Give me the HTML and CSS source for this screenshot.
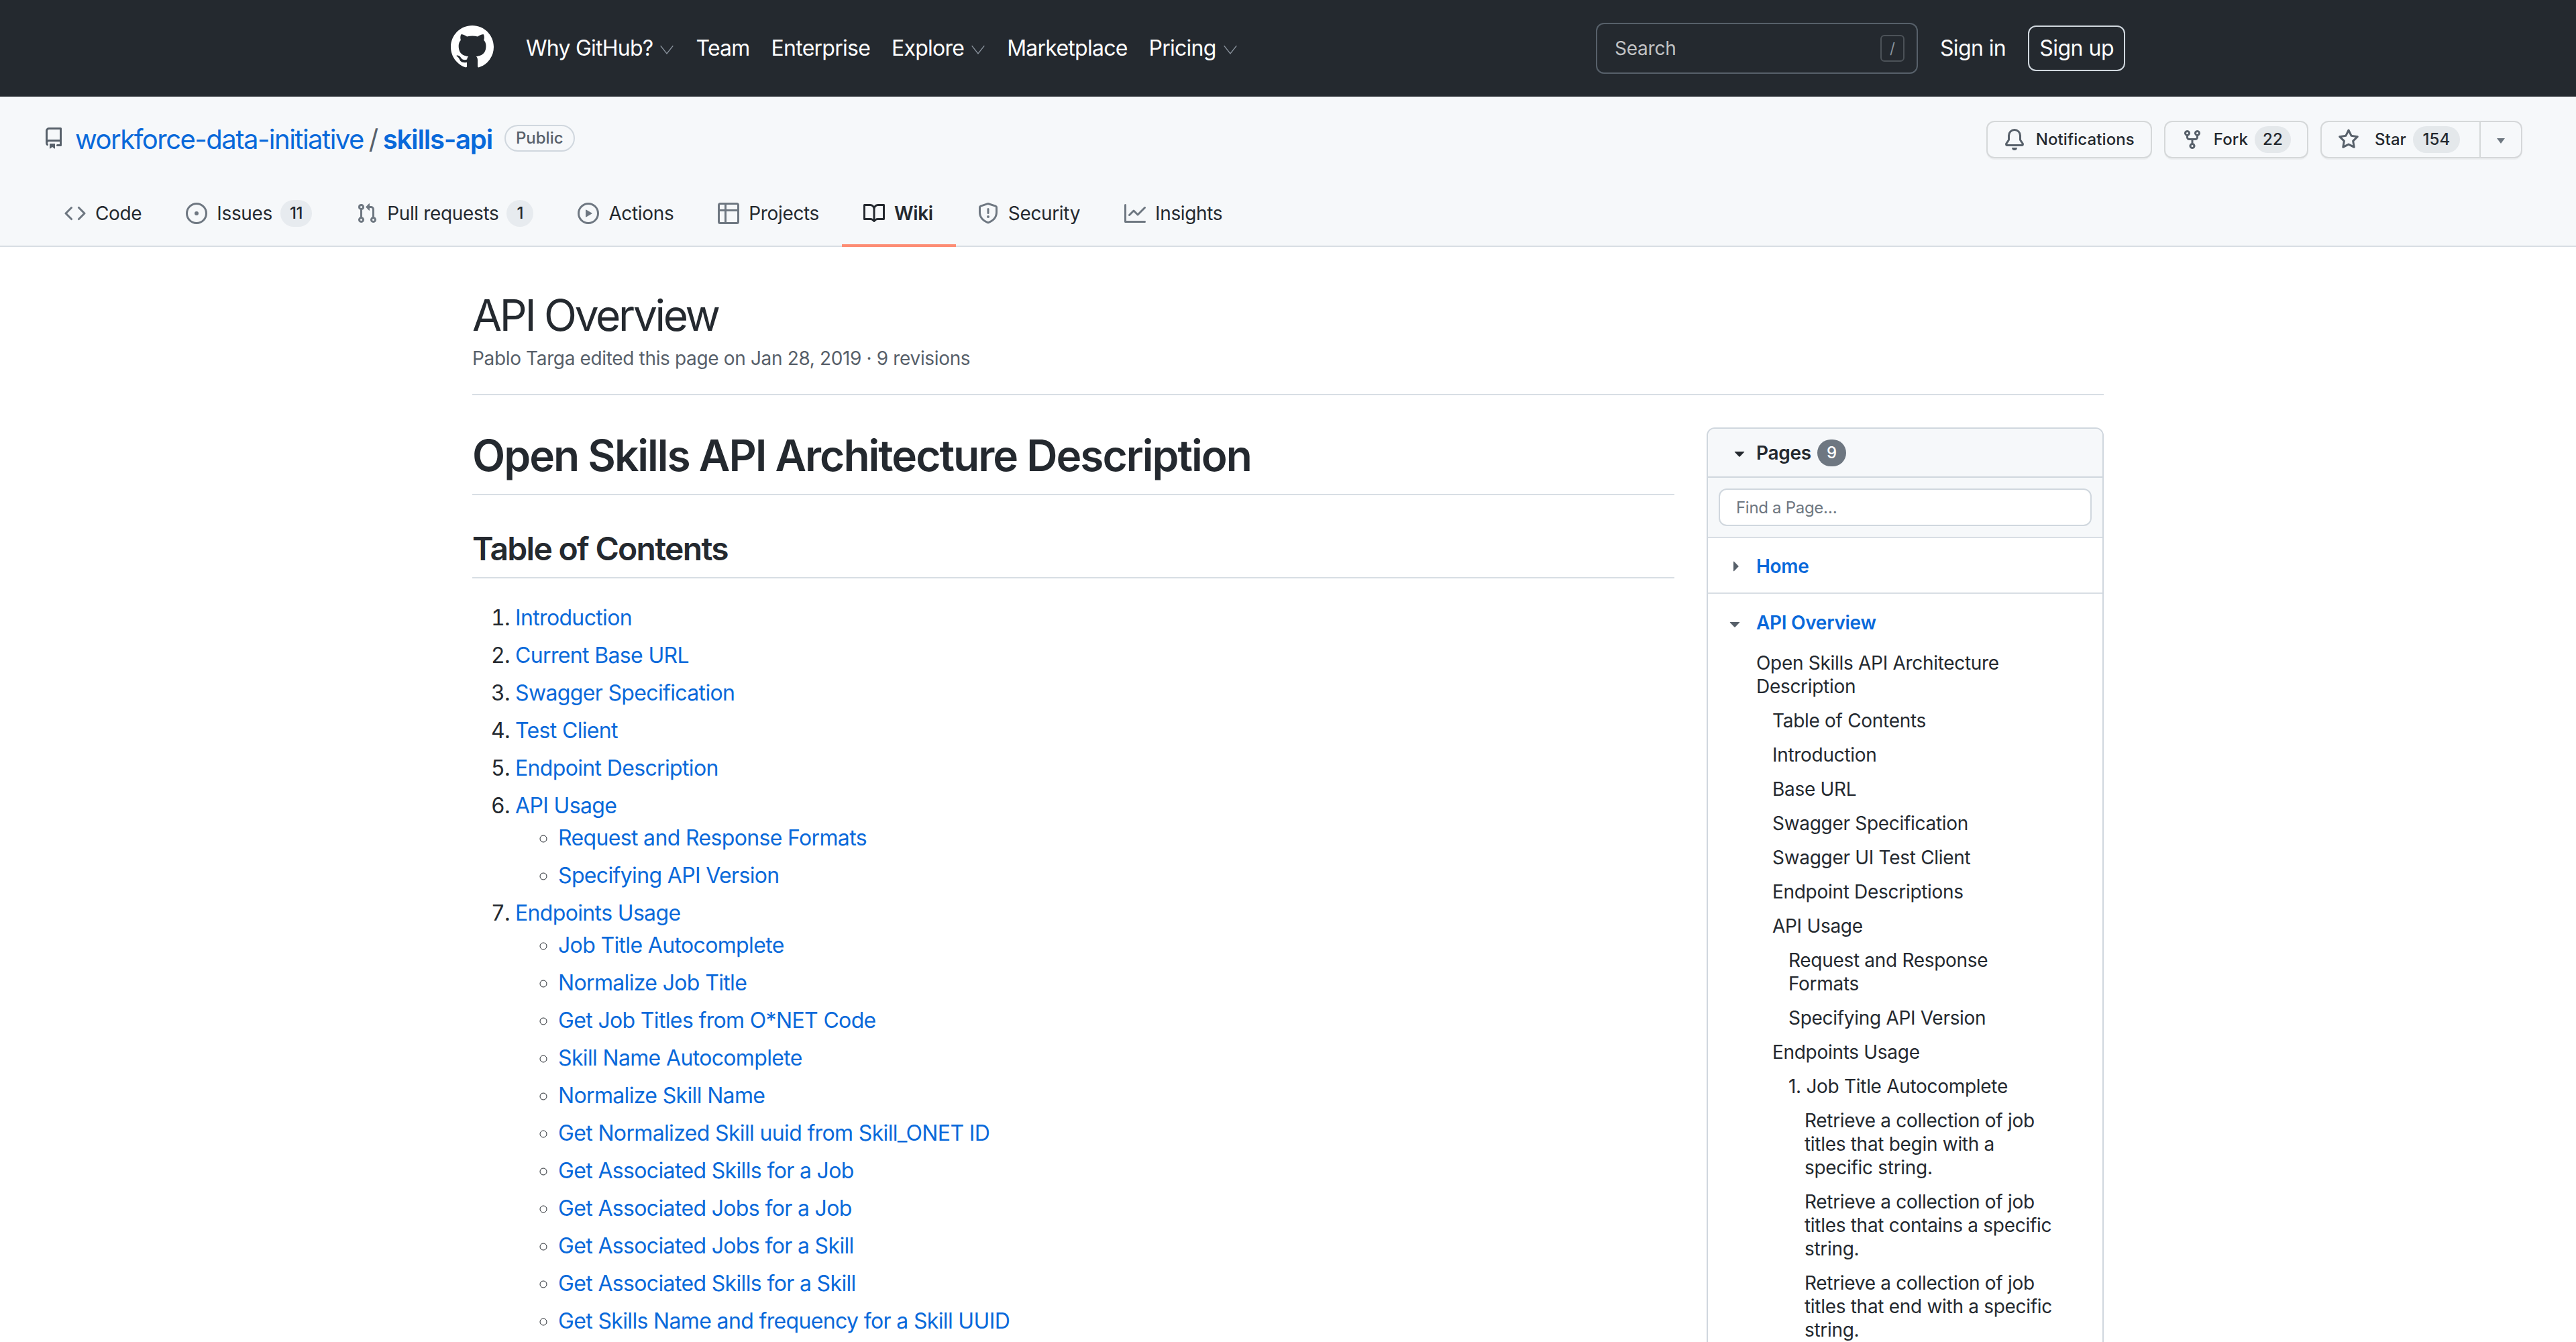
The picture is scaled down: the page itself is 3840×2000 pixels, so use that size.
FILE: index.html
```html
<!DOCTYPE html>
<html lang="en">
<head>
    <meta charset="UTF-8">
    <title>API Overview · workforce-data-initiative/skills-api Wiki</title>
    <link rel="stylesheet" href="styles.css">
</head>
<body>
    <!-- Top bar -->
    <header class="site-header">
        <div class="site-header-inner">
            <svg class="logo" viewBox="0 0 16 16"><path d="M8 0C3.58 0 0 3.58 0 8c0 3.54 2.29 6.53 5.47 7.59.4.07.55-.17.55-.38 0-.19-.01-.82-.01-1.49-2.01.37-2.53-.49-2.69-.94-.09-.23-.48-.94-.82-1.13-.28-.15-.68-.52-.01-.53.63-.01 1.08.58 1.23.82.72 1.21 1.87.87 2.33.66.07-.52.28-.87.51-1.07-1.78-.2-3.64-.89-3.64-3.95 0-.87.31-1.59.82-2.15-.08-.2-.36-1.02.08-2.12 0 0 .67-.21 2.2.82.64-.18 1.32-.27 2-.27.68 0 1.36.09 2 .27 1.53-1.04 2.2-.82 2.2-.82.44 1.1.16 1.92.08 2.12.51.56.82 1.27.82 2.15 0 3.07-1.87 3.75-3.65 3.95.29.25.54.73.54 1.48 0 1.07-.01 1.93-.01 2.2 0 .21.15.46.55.38A8.013 8.013 0 0016 8c0-4.42-3.58-8-8-8z"/></svg>
            <nav class="site-nav">
                <a href="#">Why GitHub?<svg class="chevron" viewBox="0 0 18 12"><path d="M1 1l8 10 8-10"/></svg></a>
                <a href="#">Team</a>
                <a href="#">Enterprise</a>
                <a href="#">Explore<svg class="chevron" viewBox="0 0 18 12"><path d="M1 1l8 10 8-10"/></svg></a>
                <a href="#">Marketplace</a>
                <a href="#">Pricing<svg class="chevron" viewBox="0 0 18 12"><path d="M1 1l8 10 8-10"/></svg></a>
            </nav>
            <div class="site-search">
                <span>Search</span>
                <kbd class="slash-key">/</kbd>
            </div>
            <a class="sign-in" href="#">Sign in</a>
            <a class="sign-up" href="#">Sign up</a>
        </div>
    </header>

    <!-- Repo head -->
    <section class="repo-head">
        <div class="repo-row">
            <div class="repo-title">
                <svg class="icon repo-icon" viewBox="0 0 16 16"><path fill-rule="evenodd" d="M2 2.5A2.5 2.5 0 014.5 0h8.75a.75.75 0 01.75.75v12.5a.75.75 0 01-.75.75h-2.5a.75.75 0 110-1.5h1.75v-2h-8a1 1 0 00-.714 1.7.75.75 0 01-1.072 1.05A2.495 2.495 0 012 11.5v-9zm10.5-1V9h-8c-.356 0-.694.074-1 .208V2.5a1 1 0 011-1h8zM5 12.25v3.25a.25.25 0 00.4.2l1.45-1.087a.25.25 0 01.3 0L8.6 15.7a.25.25 0 00.4-.2v-3.25a.25.25 0 00-.25-.25h-3.5a.25.25 0 00-.25.25z"/></svg>
                <a href="#">workforce-data-initiative</a>
                <span class="repo-slash">/</span>
                <a class="repo-name" href="#">skills-api</a>
                <span class="public-label">Public</span>
            </div>
            <div class="repo-actions">
                <a class="btn" href="#">
                    <svg class="icon" viewBox="0 0 16 16"><path d="M8 16a2 2 0 001.985-1.75c.017-.137-.097-.25-.235-.25h-3.5c-.138 0-.252.113-.235.25A2 2 0 008 16z"/><path fill-rule="evenodd" d="M8 1.5A3.5 3.5 0 004.5 5v2.947c0 .346-.102.683-.294.97l-1.703 2.556a.018.018 0 00-.003.01l.001.006c0 .002.002.004.004.006a.017.017 0 00.006.004l.007.001h10.964l.007-.001a.018.018 0 00.006-.004.016.016 0 00.004-.006l.001-.007a.017.017 0 00-.003-.01l-1.703-2.554a1.75 1.75 0 01-.294-.97V5A3.5 3.5 0 008 1.5zM3 5a5 5 0 0110 0v2.947c0 .05.015.098.042.139l1.703 2.555A1.518 1.518 0 0113.482 13H2.518a1.518 1.518 0 01-1.263-2.36l1.703-2.554A.25.25 0 003 7.947V5z"/></svg>
                    Notifications
                </a>
                <a class="btn" href="#">
                    <svg class="icon" viewBox="0 0 16 16"><path fill-rule="evenodd" d="M5 3.25a.75.75 0 11-1.5 0 .75.75 0 011.5 0zm0 2.122a2.25 2.25 0 10-1.5 0v.878A2.25 2.25 0 005.75 8.5h1.5v2.128a2.251 2.251 0 101.5 0V8.5h1.5a2.25 2.25 0 002.25-2.25v-.878a2.25 2.25 0 10-1.5 0v.878a.75.75 0 01-.75.75h-4.5A.75.75 0 015 6.25v-.878zm3.75 7.378a.75.75 0 11-1.5 0 .75.75 0 011.5 0zm3-8.75a.75.75 0 100-1.5.75.75 0 000 1.5z"/></svg>
                    Fork <span class="btn-count">22</span>
                </a>
                <div class="btn-group">
                    <a class="btn btn-star" href="#">
                        <svg class="icon" viewBox="0 0 16 16"><path fill-rule="evenodd" d="M8 .25a.75.75 0 01.673.418l1.882 3.815 4.21.612a.75.75 0 01.416 1.279l-3.046 2.97.719 4.192a.75.75 0 01-1.088.791L8 12.347l-3.766 1.98a.75.75 0 01-1.088-.79l.72-4.194L.818 6.374a.75.75 0 01.416-1.28l4.21-.611L7.327.668A.75.75 0 018 .25zm0 2.445L6.615 5.5a.75.75 0 01-.564.41l-3.097.45 2.24 2.184a.75.75 0 01.216.664l-.528 3.084 2.769-1.456a.75.75 0 01.698 0l2.77 1.456-.53-3.084a.75.75 0 01.216-.664l2.24-2.183-3.096-.45a.75.75 0 01-.564-.41L8 2.694v.001z"/></svg>
                        Star <span class="btn-count">154</span>
                    </a>
                    <a class="btn btn-caret" href="#"><span class="caret"></span></a>
                </div>
            </div>
        </div>
        <nav class="repo-tabs">
            <a class="tab" href="#"><svg class="icon" viewBox="0 0 16 16"><path fill-rule="evenodd" d="M4.72 3.22a.75.75 0 011.06 1.06L2.06 8l3.72 3.72a.75.75 0 11-1.06 1.06L.47 8.53a.75.75 0 010-1.06l4.25-4.25zm6.56 0a.75.75 0 10-1.06 1.06L13.94 8l-3.72 3.72a.75.75 0 101.06 1.06l4.25-4.25a.75.75 0 000-1.06l-4.25-4.25z"/></svg>Code</a>
            <a class="tab" href="#"><svg class="icon" viewBox="0 0 16 16"><path d="M8 9.5a1.5 1.5 0 100-3 1.5 1.5 0 000 3z"/><path fill-rule="evenodd" d="M8 0a8 8 0 100 16A8 8 0 008 0zM1.5 8a6.5 6.5 0 1113 0 6.5 6.5 0 01-13 0z"/></svg>Issues<span class="tab-count">11</span></a>
            <a class="tab" href="#"><svg class="icon" viewBox="0 0 16 16"><path fill-rule="evenodd" d="M7.177 3.073L9.573.677A.25.25 0 0110 .854v4.792a.25.25 0 01-.427.177L7.177 3.427a.25.25 0 010-.354zM3.75 2.5a.75.75 0 100 1.5.75.75 0 000-1.5zm-2.25.75a2.25 2.25 0 113 2.122v5.256a2.251 2.251 0 11-1.5 0V5.372A2.25 2.25 0 011.5 3.25zM11 2.5h-1V4h1a1 1 0 011 1v5.628a2.251 2.251 0 101.5 0V5A2.5 2.5 0 0011 2.5zm1 10.25a.75.75 0 111.5 0 .75.75 0 01-1.5 0zM3.75 12a.75.75 0 100 1.5.75.75 0 000-1.5z"/></svg>Pull requests<span class="tab-count">1</span></a>
            <a class="tab" href="#"><svg class="icon" viewBox="0 0 16 16"><path fill-rule="evenodd" d="M1.5 8a6.5 6.5 0 1113 0 6.5 6.5 0 01-13 0zM8 0a8 8 0 100 16A8 8 0 008 0zM6.379 5.227A.25.25 0 006 5.442v5.117a.25.25 0 00.379.214l4.264-2.559a.25.25 0 000-.428L6.379 5.227z"/></svg>Actions</a>
            <a class="tab" href="#"><svg class="icon" viewBox="0 0 16 16"><path fill-rule="evenodd" d="M0 1.75C0 .784.784 0 1.75 0h12.5C15.216 0 16 .784 16 1.75v12.5A1.75 1.75 0 0114.25 16H1.75A1.75 1.75 0 010 14.25V1.75zM1.5 6.5v7.75c0 .138.112.25.25.25H5v-8H1.5zM5 5H1.5V1.75a.25.25 0 01.25-.25H5V5zm1.5 1.5v8h7.75a.25.25 0 00.25-.25V6.5h-8zm8-1.5h-8V1.5h7.75a.25.25 0 01.25.25V5z"/></svg>Projects</a>
            <a class="tab tab-active" href="#"><svg class="icon" viewBox="0 0 16 16"><path fill-rule="evenodd" d="M0 1.75A.75.75 0 01.75 1h4.253c1.227 0 2.317.59 3 1.501A3.744 3.744 0 0111.006 1h4.245a.75.75 0 01.75.75v10.5a.75.75 0 01-.75.75h-4.507a2.25 2.25 0 00-1.591.659l-.622.621a.75.75 0 01-1.06 0l-.622-.621A2.25 2.25 0 005.258 13H.75a.75.75 0 01-.75-.75V1.75zm8.755 3a2.25 2.25 0 012.25-2.25H14.5v9h-3.757c-.71 0-1.4.201-1.992.572l.004-7.322zm-1.504 7.324l.004-5.073-.002-2.253A2.25 2.25 0 005.003 2.5H1.5v9h3.757a3.75 3.75 0 011.994.574z"/></svg>Wiki</a>
            <a class="tab" href="#"><svg class="icon" viewBox="0 0 16 16"><path fill-rule="evenodd" d="M7.467.133a1.75 1.75 0 011.066 0l5.25 1.68A1.75 1.75 0 0115 3.48V7c0 1.566-.32 3.182-1.303 4.682-.983 1.498-2.585 2.813-5.032 3.855a1.7 1.7 0 01-1.33 0c-2.447-1.042-4.049-2.357-5.032-3.855C1.32 10.182 1 8.566 1 7V3.48a1.75 1.75 0 011.217-1.667l5.25-1.68zm.61 1.429a.25.25 0 00-.153 0l-5.25 1.68a.25.25 0 00-.174.238V7c0 1.358.275 2.666 1.057 3.86.784 1.194 2.121 2.34 4.366 3.297a.2.2 0 00.154 0c2.245-.956 3.582-2.104 4.366-3.298C13.225 9.666 13.5 8.36 13.5 7V3.48a.25.25 0 00-.174-.237l-5.25-1.68zM9 10.5a1 1 0 11-2 0 1 1 0 012 0zm-.25-5.75a.75.75 0 10-1.5 0v3a.75.75 0 001.5 0v-3z"/></svg>Security</a>
            <a class="tab" href="#"><svg class="icon" viewBox="0 0 16 16"><path fill-rule="evenodd" d="M1.5 1.75a.75.75 0 00-1.5 0v12.5c0 .414.336.75.75.75h14.5a.75.75 0 000-1.5H1.5V1.75zm14.28 2.53a.75.75 0 00-1.06-1.06L10 7.94 7.53 5.47a.75.75 0 00-1.06 0L3.22 8.72a.75.75 0 001.06 1.06L7 7.06l2.47 2.47a.75.75 0 001.06 0l5.25-5.25z"/></svg>Insights</a>
        </nav>
    </section>

    <main class="container">
        <div class="wiki-head">
            <h1>API Overview</h1>
            <p>Pablo Targa edited this page on Jan 28, 2019 · 9 revisions</p>
        </div>

        <div class="wiki-layout">
            <!-- Wiki body -->
            <article class="markdown">
                <h1>Open Skills API Architecture Description</h1>
                <h2>Table of Contents</h2>
                <ol>
                    <li><a href="#">Introduction</a></li>
                    <li><a href="#">Current Base URL</a></li>
                    <li><a href="#">Swagger Specification</a></li>
                    <li><a href="#">Test Client</a></li>
                    <li><a href="#">Endpoint Description</a></li>
                    <li><a href="#">API Usage</a>
                        <ul>
                            <li><a href="#">Request and Response Formats</a></li>
                            <li><a href="#">Specifying API Version</a></li>
                        </ul>
                    </li>
                    <li><a href="#">Endpoints Usage</a>
                        <ul>
                            <li><a href="#">Job Title Autocomplete</a></li>
                            <li><a href="#">Normalize Job Title</a></li>
                            <li><a href="#">Get Job Titles from O*NET Code</a></li>
                            <li><a href="#">Skill Name Autocomplete</a></li>
                            <li><a href="#">Normalize Skill Name</a></li>
                            <li><a href="#">Get Normalized Skill uuid from Skill_ONET ID</a></li>
                            <li><a href="#">Get Associated Skills for a Job</a></li>
                            <li><a href="#">Get Associated Jobs for a Job</a></li>
                            <li><a href="#">Get Associated Jobs for a Skill</a></li>
                            <li><a href="#">Get Associated Skills for a Skill</a></li>
                            <li><a href="#">Get Skills Name and frequency for a Skill UUID</a></li>
                        </ul>
                    </li>
                </ol>
            </article>

            <!-- Pages sidebar -->
            <aside class="pages-box">
                <div class="pages-header">
                    <svg class="icon" viewBox="0 0 16 16"><path d="M4.427 7.427l3.396 3.396a.25.25 0 00.354 0l3.396-3.396A.25.25 0 0011.396 7H4.604a.25.25 0 00-.177.427z"/></svg>
                    <span>Pages</span>
                    <span class="pages-count">9</span>
                </div>
                <div class="pages-filter">
                    <div class="filter-input">Find a Page…</div>
                </div>
                <div class="page-row page-row-home">
                    <svg class="icon" viewBox="0 0 16 16"><path d="M6.427 4.427l3.396 3.396a.25.25 0 010 .354l-3.396 3.396A.25.25 0 016 11.396V4.604a.25.25 0 01.427-.177z"/></svg>
                    <a href="#">Home</a>
                </div>
                <div class="page-row page-row-open">
                    <svg class="icon" viewBox="0 0 16 16"><path d="M4.427 7.427l3.396 3.396a.25.25 0 00.354 0l3.396-3.396A.25.25 0 0011.396 7H4.604a.25.25 0 00-.177.427z"/></svg>
                    <a href="#">API Overview</a>
                </div>
                <ul class="page-toc">
                    <li>Open Skills API Architecture Description</li>
                    <li class="lvl1">Table of Contents</li>
                    <li class="lvl1">Introduction</li>
                    <li class="lvl1">Base URL</li>
                    <li class="lvl1">Swagger Specification</li>
                    <li class="lvl1">Swagger UI Test Client</li>
                    <li class="lvl1">Endpoint Descriptions</li>
                    <li class="lvl1">API Usage</li>
                    <li class="lvl2">Request and Response Formats</li>
                    <li class="lvl2">Specifying API Version</li>
                    <li class="lvl1">Endpoints Usage</li>
                    <li class="lvl2">1. Job Title Autocomplete</li>
                    <li class="lvl3">Retrieve a collection of job titles that begin with a specific string.</li>
                    <li class="lvl3">Retrieve a collection of job titles that contains a specific string.</li>
                    <li class="lvl3">Retrieve a collection of job titles that end with a specific string.</li>
                </ul>
            </aside>
        </div>
    </main>
</body>
</html>
```

FILE: styles.css
```css
* { box-sizing: border-box; }

html, body {
    height: 2000px;
    overflow: hidden;
}
body {
    margin: 0;
    font-family: Inter, "Noto Sans", sans-serif;
    font-size: 28px;
    line-height: 1.5;
    color: #24292f;
    background: #fff;
}
a { color: #0969da; text-decoration: none; }

.icon {
    width: 32px;
    height: 32px;
    flex: none;
    fill: #57606a;
}

/* top bar */
.site-header { background: #24292f; height: 144px; }
.site-header-inner {
    max-width: 2560px;
    height: 100%;
    margin: 0 auto;
    padding: 0 32px;
    display: flex;
    align-items: center;
}
.logo { width: 64px; height: 64px; fill: #fff; margin: -4px 48px 0 0; flex: none; }
.site-nav { display: flex; gap: 32px; }
.site-nav a {
    color: #fff;
    font-size: 32px;
    letter-spacing: -0.75px;
    display: flex;
    align-items: center;
    gap: 10px;
}
.chevron { width: 22px; height: 14px; fill: none; stroke: #8b949e; stroke-width: 1.2; margin-top: 4px; }
.site-search {
    margin-left: auto;
    width: 480px;
    height: 76px;
    margin-top: -1px;
    padding: 0 18px 0 26px;
    border: 2px solid #57606a;
    border-radius: 12px;
    color: rgba(255,255,255,.72);
    letter-spacing: -0.2px;
    display: flex;
    align-items: center;
    justify-content: space-between;
}
.slash-key {
    width: 36px;
    height: 40px;
    border: 2px solid #4c5258;
    border-radius: 6px;
    font: 22px/36px Inter, sans-serif;
    color: #8b949e;
    text-align: center;
}
.sign-in { color: #fff; font-size: 32px; letter-spacing: -0.6px; margin-left: 33px; }
.sign-up {
    color: #fff;
    font-size: 32px;
    letter-spacing: -0.5px;
    margin-left: 33px;
    padding: 0 15px;
    height: 68px;
    line-height: 64px;
    border: 2px solid #d0d7de;
    border-radius: 12px;
}

/* repo head */
.repo-head { background: #f6f8fa; height: 224px; border-bottom: 2px solid #d8dee4; }
.repo-row {
    display: flex;
    justify-content: space-between;
    align-items: center;
    padding: 36px 80px 0 64px;
}
.repo-title { display: flex; align-items: center; font-size: 40px; line-height: 56px; letter-spacing: -1.5px; }
.repo-icon { margin: -4px 16px 0 0; }
.repo-slash { color: #57606a; margin: 0 8px; }
.repo-name { font-weight: 600; letter-spacing: -1.2px; }
.public-label {
    font-size: 24px;
    font-weight: 500;
    line-height: 36px;
    letter-spacing: 0;
    color: #57606a;
    border: 2px solid #d0d7de;
    border-radius: 40px;
    padding: 0 15px;
    margin: -4px 0 0 18px;
}
.repo-actions { display: flex; gap: 18px; }
.btn {
    display: flex;
    align-items: center;
    height: 56px;
    padding: 0 24px;
    gap: 16px;
    font-size: 24px;
    font-weight: 500;
    letter-spacing: 0.1px;
    color: #24292f;
    background: #f6f8fa;
    border: 2px solid rgba(27,31,36,.15);
    border-radius: 12px;
    box-shadow: 0 2px 0 rgba(27,31,36,.04);
}
.btn-count {
    min-width: 40px;
    height: 40px;
    line-height: 40px;
    padding: 0 12px;
    margin: 0 0 0 -6px;
    border-radius: 40px;
    text-align: center;
    background: rgba(175,184,193,.25);
}
.btn-group { display: flex; }
.btn-group .btn:first-child { border-radius: 12px 0 0 12px; }
.btn-star .icon { margin-right: 7px; }
.btn-star .btn-count { min-width: 70px; margin-right: 5px; }
.btn-caret { border-left: 0; border-radius: 0 12px 12px 0; padding: 0 24px; }
.caret {
    width: 0;
    height: 0;
    border: 6px solid transparent;
    border-top: 8px solid #6e7781;
    border-bottom: 0;
    margin-top: 4px;
}

/* tabs */
.repo-tabs { display: flex; padding: 36px 0 0 64px; }
.tab {
    display: flex;
    align-items: center;
    height: 94px;
    padding: 0 34px 2px 32px;
    color: #24292f;
    letter-spacing: -0.35px;
}
.tab .icon { margin-right: 14px; fill: #6e7781; }
.tab-active { font-weight: 600; border-bottom: 4px solid #fd8c73; padding-bottom: 0; height: 96px; margin-bottom: -2px; }
.tab-active .icon { fill: #24292f; }
.tab-count {
    min-width: 40px;
    height: 40px;
    line-height: 40px;
    padding: 0 14px;
    margin-left: 12px;
    border-radius: 40px;
    font-size: 24px;
    font-weight: 500;
    text-align: center;
    background: rgba(175,184,193,.2);
}

/* page */
.container { width: 2432px; margin: 0 auto; }
.wiki-head { padding: 62px 0 32px; border-bottom: 2px solid #d8dee4; }
.wiki-head h1 { margin: 0; font-size: 64px; font-weight: 400; line-height: 80px; letter-spacing: -3.3px; }
.wiki-head p { margin: 3px 0 0; color: #57606a; letter-spacing: -0.35px; }
.wiki-layout { display: flex; justify-content: space-between; margin-top: 48px; }

.markdown { width: 1792px; font-size: 32px; letter-spacing: -0.65px; }
.markdown h1, .markdown h2 { margin: 0; font-weight: 600; line-height: 1.25; border-bottom: 2px solid #d8dee4; }
.markdown h1 { font-size: 64px; padding: 2px 0 17px; letter-spacing: -2px; }
.markdown h2 { font-size: 48px; padding: 2px 0 12px; margin-top: 48px; letter-spacing: -1.7px; }
.markdown ol { margin: 35px 0 0; padding-left: 64px; }
.markdown ul { margin: 0; padding-left: 64px; list-style: circle; }
.markdown li + li { margin-top: 8px; }

/* pages sidebar */
.pages-box {
    width: 592px;
    min-height: 1500px;
    border: 2px solid #d0d7de;
    border-radius: 12px;
    letter-spacing: -0.3px;
}
.pages-header {
    display: flex;
    align-items: center;
    height: 73px;
    padding-left: 31px;
    gap: 9px;
    font-weight: 600;
    background: #f6f8fa;
    border-bottom: 2px solid #d0d7de;
    border-radius: 10px 10px 0 0;
}
.pages-header .icon { fill: #24292f; }
.pages-count {
    width: 43px;
    height: 40px;
    line-height: 40px;
    border-radius: 40px;
    font-size: 24px;
    font-weight: 500;
    text-align: center;
    color: #fff;
    background: #6e7781;
}
.pages-filter {
    padding: 16px 16px;
    height: 90px;
    background: #f6f8fa;
    border-bottom: 2px solid #d8dee4;
}
.filter-input {
    height: 56px;
    line-height: 54px;
    padding-left: 24px;
    font-size: 24px;
    color: #6e7781;
    background: #fff;
    border: 2px solid #d0d7de;
    border-radius: 12px;
}
.page-row { display: flex; align-items: center; font-weight: 600; }
.page-row-home {
    height: 83px;
    padding: 3px 0 0 26px;
    gap: 14px;
    border-bottom: 2px solid #d8dee4;
}
.page-row-open { padding: 26px 0 0 24px; gap: 16px; line-height: 35px; }
.page-toc {
    list-style: none;
    margin: 25px 0 0;
    padding: 0 64px 0 72px;
    line-height: 35px;
}
.page-toc li + li { margin-top: 16px; }
.page-toc .lvl1 { padding-left: 24px; }
.page-toc .lvl2 { padding-left: 48px; }
.page-toc .lvl3 { padding-left: 72px; }
```
